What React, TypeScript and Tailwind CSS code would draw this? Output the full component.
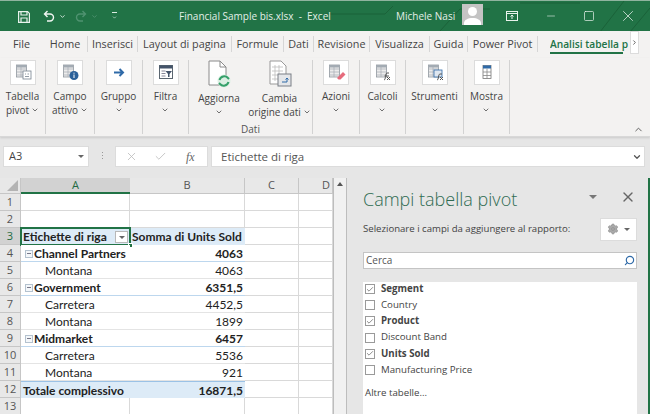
import React from 'react';
import { ChevronDown, ChevronUp, ChevronRight, X, Check, Settings, Search, Minus, Square } from 'lucide-react';

const ui = { fontFamily: '"Open Sans", "Noto Sans", sans-serif' };
const cellFont = { fontFamily: 'Lato, "Open Sans", sans-serif' };

const tabs: [string, number][] = [
  ['File', 43],
  ['Home', 44],
  ['Inserisci', 50],
  ['Layout di pagina', 94],
  ['Formule', 52],
  ['Dati', 30],
  ['Revisione', 56],
  ['Visualizza', 60],
  ['Guida', 38],
  ['Power Pivot', 71],
];

const Doc = () => (
  <svg viewBox="0 0 26 25" className="w-[26px] h-[25px]">
    <rect x="0.5" y="0.5" width="25" height="24" fill="#fff" stroke="#dcdcdc" />
  </svg>
);

// small ribbon glyphs, drawn on the white 26px tile
const IconSheet = ({ badge }: { badge: React.ReactNode }) => (
  <svg viewBox="0 0 26 25" className="absolute inset-0 w-[26px] h-[25px]">
    <rect x="6.500" y="5" width="10" height="12" fill="#ececec" stroke="#8f979f" strokeWidth="0.8" />
    <path d="M6.500 9h10M6.500 12h10M6.500 15h10M11 5v12" stroke="#a8aeb4" strokeWidth="0.7" />
    <rect x="6.500" y="5" width="10" height="2.500" fill="#a3abb3" />
    {badge}
  </svg>
);

const Big = ({ w, lines, icon, chevAfter, chevBelow = false }: { w: number; lines: string[]; icon: React.ReactNode; chevAfter?: boolean; chevBelow?: boolean }) => (
  <div className="flex flex-col items-center shrink-0" style={{ width: w }}>
    <div className="relative w-[26px] h-[25px] mt-[2px]">
      <Doc />
      {icon}
    </div>
    <div className="mt-[4px] text-[10px] leading-[14px] text-[#444] text-center whitespace-nowrap">
      {lines.map((l, i) => (
        <div key={i} className="flex items-center justify-center gap-[2px]">
          {l}
          {chevAfter && i === lines.length - 1 && <ChevronDown className="w-[8px] h-[8px] text-[#555]" strokeWidth={2.5} />}
        </div>
      ))}
      {chevBelow && <div className="flex justify-center"><ChevronDown className="w-[8px] h-[14px] text-[#555]" strokeWidth={2.5} /></div>}
    </div>
  </div>
);

const Sep = () => <div className="w-px h-[74px] mt-[2px] shrink-0 bg-[#d2d2d2]" />;

const rows: { n: number; a?: string; b?: string; kind?: string }[] = [
  { n: 1 },
  { n: 2 },
  { n: 3, kind: 'head' },
  { n: 4, a: 'Channel Partners', b: '4063', kind: 'group' },
  { n: 5, a: 'Montana', b: '4063', kind: 'item' },
  { n: 6, a: 'Government', b: '6351,5', kind: 'group' },
  { n: 7, a: 'Carretera', b: '4452,5', kind: 'item' },
  { n: 8, a: 'Montana', b: '1899', kind: 'item' },
  { n: 9, a: 'Midmarket', b: '6457', kind: 'group' },
  { n: 10, a: 'Carretera', b: '5536', kind: 'item' },
  { n: 11, a: 'Montana', b: '921', kind: 'item' },
  { n: 12, a: 'Totale complessivo', b: '16871,5', kind: 'total' },
  { n: 13 },
];

const fields: [string, boolean][] = [
  ['Segment', true],
  ['Country', false],
  ['Product', true],
  ['Discount Band', false],
  ['Units Sold', true],
  ['Manufacturing Price', false],
];

const Row = ({ r }: { r: (typeof rows)[number] }) => {
  const grid = 'border-b border-r border-[#d9d9d9]';
  const selected = r.kind === 'head';
  const blue = r.kind === 'head' || r.kind === 'total';
  const line =
    r.kind === 'group' ? 'border-b border-[#bdd7ee]' : r.kind === 'total' ? 'border-t border-[#9bc2e6]' : r.kind === 'item' ? 'border-b border-[#e4e4e4]' : '';
  return (
    <>
      <div className={`flex items-center justify-center border-b border-r border-[#c6c6c6] text-[11px] ${selected ? 'bg-[#d2d2d2] text-[#1f6b42]' : 'bg-[#e8e8e8] text-[#555]'}`} style={ui}>
        {r.n}
      </div>
      <div className={`relative flex items-center pt-px text-[12px] whitespace-nowrap text-[#222] ${blue ? 'bg-[#ddebf7]' : 'bg-white'} ${r.kind ? line : grid}`} style={cellFont}>
        {r.kind === 'head' && (
          <>
            <span className="pl-[2px] font-bold">Etichette di riga</span>
            <div className="absolute left-[94px] top-[3px] w-[13px] h-[12px] bg-white border border-[#b8b8b8] flex items-center justify-center">
              <div className="w-0 h-0 border-l-[3px] border-r-[3px] border-t-[3px] border-l-transparent border-r-transparent border-t-[#666]" />
            </div>
            <div className="absolute -left-px -top-px -right-px -bottom-px border-2 border-[#217346]" />
            <div className="absolute -right-[3px] -bottom-[3px] w-[5px] h-[5px] bg-[#217346] border border-white" />
          </>
        )}
        {r.kind === 'group' && (
          <>
            <div className="ml-[4px] mr-px w-[8px] h-[8px] border border-[#b4c2cf] flex items-center justify-center bg-[#f4f7fa]">
              <div className="w-[4px] h-px bg-[#778]" />
            </div>
            <span className="font-bold">{r.a}</span>
          </>
        )}
        {r.kind === 'item' && <span className="pl-[24px]">{r.a}</span>}
        {r.kind === 'total' && <span className="pl-[2px] font-bold">{r.a}</span>}
      </div>
      <div className={`flex items-center justify-end pt-px pr-[2px] text-[12px] whitespace-nowrap text-[#222] ${blue ? 'bg-[#ddebf7]' : 'bg-white'} ${r.kind ? line : grid} ${r.kind === 'group' || r.kind === 'total' ? 'font-bold' : ''}`} style={cellFont}>
        {r.kind === 'head' ? <span className="font-bold pl-[2px] w-full">Somma di Units Sold</span> : r.b}
      </div>
      <div className={`bg-white ${grid}`} />
      <div className={`bg-white ${grid}`} />
    </>
  );
};

export default function App() {
  return (
    <div className="w-[650px] h-[414px] overflow-hidden flex flex-col bg-[#e6e6e6]" style={ui}>
      {/* title bar */}
      <div className="relative h-[31px] shrink-0 bg-[#217346] border-t border-[#8fb49f] flex items-center text-[#e3efe8]">
        <svg viewBox="0 0 650 31" className="absolute inset-0 w-[650px] h-[31px]" fill="none" stroke="#1b6239" strokeWidth="1">
          <path d="M325 13h60l8-8M440 30l20-22h30M600 31l24-31M630 31l20-24M520 2h60" />
        </svg>
        <svg viewBox="0 0 12 12" className="relative ml-[18px] w-[12px] h-[12px] mt-[1px]" fill="none" stroke="#e8f2ec" strokeWidth="1.2">
          <path d="M0.600 0.600h9l1.800 1.800v9H0.600z" />
          <path d="M3 0.600v3.400h6V0.600M3 11.400V7h6v4.400" />
        </svg>
        <svg viewBox="0 0 12 12" className="relative ml-[13px] w-[12px] h-[12px]" fill="none" stroke="#f0f6f2" strokeWidth="1.4">
          <path d="M4.500 1 1.500 4l3 3M1.500 4H7a3.500 3.500 0 0 1 0 7H4" />
        </svg>
        <ChevronDown className="relative ml-[4px] w-[7px] h-[7px] text-[#dcebe2]" strokeWidth={3} />
        <svg viewBox="0 0 12 12" className="relative ml-[9px] w-[12px] h-[12px]" fill="none" stroke="#4f9270" strokeWidth="1.4">
          <path d="M7.500 1l3 3-3 3M10.500 4H5a3.500 3.500 0 0 0 0 7h3" />
        </svg>
        <ChevronDown className="relative ml-[4px] w-[7px] h-[7px] text-[#4f9270]" strokeWidth={3} />
        <div className="relative ml-[13px] flex flex-col items-center gap-[1.5px]">
          <div className="w-[5px] h-px bg-[#dcebe2]" />
          <ChevronDown className="w-[7px] h-[5px] text-[#dcebe2]" strokeWidth={3} />
        </div>
        <span className="relative ml-[61px] text-[10px] whitespace-nowrap w-[217px]">Financial Sample bis.xlsx&nbsp; -&nbsp; Excel</span>
        <span className="relative text-[10px] whitespace-nowrap w-[66px]">Michele Nasi</span>
        <svg viewBox="0 0 21 21" className="relative w-[21px] h-[21px] -mt-[3px]">
          <rect width="21" height="21" fill="#c4c4c4" />
          <circle cx="10.500" cy="7.500" r="4.500" fill="#fff" />
          <path d="M2 21v-2c0-3 4-5 8.500-5s8.500 2 8.500 5v2z" fill="#fff" />
        </svg>
        <svg viewBox="0 0 12 10" className="relative ml-[23px] w-[12px] h-[10px]" fill="none" stroke="#e8f2ec">
          <rect x="0.500" y="0.500" width="11" height="9" />
          <path d="M1 2.500h10M6 8V4M4.500 5.500 6 4l1.500 1.500" />
        </svg>
        <Minus className="relative ml-[27px] w-[12px] h-[12px] text-[#e8f2ec]" strokeWidth={1.2} />
        <Square className="relative ml-[26px] w-[12px] h-[12px] text-[#e8f2ec]" strokeWidth={1.4} />
        <X className="relative ml-[24px] w-[18px] h-[18px] text-[#e8f2ec]" strokeWidth={1} />
      </div>

      {/* tabs */}
      <div className="relative h-[27px] shrink-0 bg-[#f3f2f1] flex items-start pt-[5px] text-[10.8px] text-[#444]">
        {tabs.map(([t, w], i) => (
          <div key={t} className={`h-[16px] flex items-center justify-center whitespace-nowrap shrink-0 ${i > 1 ? 'border-l border-[#d6d6d6]' : ''} ${i === 9 ? 'border-r' : ''}`} style={{ width: w }}>
            {t}
          </div>
        ))}
        <div className="relative ml-[12px] h-[18px] text-[10.2px] text-[#217346] font-semibold whitespace-nowrap w-[80px] overflow-hidden leading-[16px]">
          Analisi tabella p
          <div className="absolute left-0 bottom-0 w-[73px] h-[2px] bg-[#217346]" />
        </div>
        <div className="w-[9px] h-[23px] -mt-[5px] bg-white border border-[#dcdcdc] flex items-center justify-center">
          <ChevronRight className="w-[7px] h-[7px] text-[#555]" strokeWidth={3} />
        </div>
      </div>

      {/* ribbon */}
      <div className="relative h-[79px] shrink-0 bg-[#f3f2f1] flex items-start border-b border-[#d8d8d8] shadow-[0_1px_2px_rgba(0,0,0,0.12)]">
        <Big w={45} lines={['Tabella', 'pivot']} chevAfter icon={<IconSheet badge={<><rect x="13" y="11" width="8" height="8" fill="#fff" stroke="#77838f" strokeWidth="0.8" /><path d="M15 14h1M17.500 14H19M15 16.500h4" stroke="#77838f" strokeWidth="0.8" /></>} />} />
        <Sep />
        <Big w={48} lines={['Campo', 'attivo']} chevAfter icon={<IconSheet badge={<><circle cx="17" cy="15.500" r="4.500" fill="#2a6099" /><path d="M17 14.500V18M17 12.700v1" stroke="#fff" /></>} />} />
        <Sep />
        <Big w={47} lines={['Gruppo']} chevBelow icon={<svg viewBox="0 0 26 25" className="absolute inset-0 w-[26px] h-[25px]"><path d="M8 12.500h9M13.500 9l3.500 3.500-3.500 3.500" fill="none" stroke="#2f6aa8" strokeWidth="2" /></svg>} />
        <Sep />
        <Big w={45} lines={['Filtra']} chevBelow icon={<svg viewBox="0 0 26 25" className="absolute inset-0 w-[26px] h-[25px]"><rect x="6.500" y="5.500" width="13" height="13" fill="#fff" stroke="#5b6670" strokeWidth="1" /><rect x="6.500" y="5.500" width="13" height="3" fill="#44546a" /><path d="M8.500 11h4M8.500 13.500h4M8.500 16h4" stroke="#889" /><path d="M12.500 11h6.500l-2.500 3v3h-1.500v-3z" fill="#44546a" /></svg>} />
        <Sep />
        <div className="flex flex-col items-center shrink-0 w-[123px] h-[79px]">
          <div className="flex">
            <div className="flex flex-col items-center w-[56px] ml-[2px]">
              <svg viewBox="0 0 24 28" className="w-[24px] h-[28px] mt-[2px] mb-[3px]">
                <path d="M2 1h11l6 6v18H2z" fill="#fff" stroke="#8a8a8a" />
                <path d="M13 1v6h6" fill="none" stroke="#8a8a8a" />
                <circle cx="17" cy="21" r="6.500" fill="#dcefe3" />
                <path d="M12.500 20a5 5 0 0 1 8.500-2l1 1M21.500 22a5 5 0 0 1-8.500 2l-1-1" fill="none" stroke="#36a06a" strokeWidth="2" />
              </svg>
              <div className="text-[10px] leading-[14px] text-[#444]">Aggiorna</div>
              <ChevronDown className="w-[8px] h-[14px] text-[#555]" strokeWidth={2.5} />
            </div>
            <div className="flex flex-col items-center w-[65px]">
              <svg viewBox="0 0 26 28" className="w-[26px] h-[28px] mt-[2px] mb-[3px]">
                <path d="M3 1h11l5 5v18H3z" fill="#fff" stroke="#999" />
                <path d="M5 7h11M5 11h11M5 15h11M5 19h11M8 5v16M12 5v16" stroke="#bbb" strokeWidth="0.8" />
                <rect x="11" y="14" width="13" height="12" fill="#e4e6e9" stroke="#7a7f86" />
                <path d="M15 22h5v-4M18.500 19.500 20 18l1.500 1.500" fill="none" stroke="#2f6aa8" />
              </svg>
              <div className="text-[10px] leading-[14px] text-[#444]">Cambia</div>
              <div className="text-[10px] leading-[14px] text-[#444] flex items-center gap-[2px] whitespace-nowrap">
                origine dati
                <ChevronDown className="w-[8px] h-[8px] text-[#555]" strokeWidth={2.5} />
              </div>
            </div>
          </div>
          <div className="mt-auto mb-px text-[10px] leading-[14px] text-[#555]">Dati</div>
        </div>
        <Sep />
        <Big w={46} lines={['Azioni']} chevBelow icon={<IconSheet badge={<path d="M14 18l6-6 2.500 2.500-5 5h-2z" fill="#e66b7c" />} />} />
        <Sep />
        <Big w={45} lines={['Calcoli']} chevBelow icon={<IconSheet badge={<path d="M14 20c2 0 1-7 3-7h2M14.500 16H19M17 17l3 3M20 17l-3 3" fill="none" stroke="#555" />} />} />
        <Sep />
        <Big w={57} lines={['Strumenti']} chevBelow icon={<IconSheet badge={<><rect x="12" y="10" width="8" height="7" fill="#dfe7f0" stroke="#2f6aa8" strokeWidth="0.8" /><path d="M15 20c2 0 1-6 3-6h2M18 17l3 3M21 17l-3 3" fill="none" stroke="#555" /></>} />} />
        <Sep />
        <Big w={45} lines={['Mostra']} chevBelow icon={<svg viewBox="0 0 26 25" className="absolute inset-0 w-[26px] h-[25px]"><rect x="9" y="5.500" width="8" height="13" fill="#fff" stroke="#777" strokeWidth="0.8" /><rect x="9" y="5.500" width="8" height="3" fill="#2f6aa8" /><path d="M9 12h8M9 15.500h8M13 8.500v10" stroke="#888" strokeWidth="0.8" /></svg>} />
        <Sep />
        <ChevronUp className="absolute right-[6px] bottom-[1px] w-[11px] h-[11px] text-[#555]" strokeWidth={2} />
      </div>

      {/* formula bar */}
      <div className="h-[41px] shrink-0 flex items-start pt-[9px] pl-[3px] pr-[5px]">
        <div className="w-[86px] h-[21px] bg-white border border-[#dcdcdc] flex items-center justify-between pl-[5px] pr-[4px] text-[11px] text-[#444]">
          A3
          <div className="w-0 h-0 border-l-[3px] border-r-[3px] border-t-[3px] border-l-transparent border-r-transparent border-t-[#666]" />
        </div>
        <div className="ml-[13px] mt-[6px] flex flex-col gap-[2px]">
          <div className="w-px h-px bg-[#999]" />
          <div className="w-px h-px bg-[#999]" />
          <div className="w-px h-px bg-[#999]" />
        </div>
        <div className="ml-[12px] w-[93px] h-[21px] bg-white border border-[#dcdcdc] flex items-center text-[#bbb]">
          <X className="ml-[9px] w-[13px] h-[13px]" strokeWidth={1.5} />
          <Check className="ml-[16px] w-[13px] h-[13px]" strokeWidth={1.5} />
          <span className="ml-[19px] text-[12px] italic text-[#666]" style={{ fontFamily: '"Liberation Serif", serif' }}>fx</span>
        </div>
        <div className="ml-[3px] flex-1 h-[21px] bg-white border border-[#dcdcdc] flex items-center justify-between pl-[9px] pr-[2px] text-[11.5px] text-[#555]">
          Etichette di riga
          <ChevronDown className="w-[10px] h-[10px] text-[#555]" strokeWidth={3} />
        </div>
      </div>

      {/* sheet + pane */}
      <div className="flex-1 flex min-h-0">
        <div className="w-[348px] shrink-0 flex items-start overflow-hidden">
          <div className="grid shrink-0 grid-cols-[21px_109px_115px_54px_34px] grid-rows-[16px_repeat(13,17px)]">
            <div className="bg-[#e8e8e8] border-b border-r border-[#c6c6c6] relative overflow-hidden">
              <svg viewBox="0 0 12 12" className="absolute right-[2px] bottom-[2px] w-[11px] h-[11px]"><path d="M12 0v12H0z" fill="#b4b4b4" /></svg>
            </div>
            <div className="bg-[#d2d2d2] border-b-2 border-[#217346] flex items-center justify-center text-[11px] text-[#1f6b42]">A</div>
            {['B', 'C', 'D'].map((c, i) => (
              <div key={c} className={`bg-[#e8e8e8] border-b border-r border-[#c6c6c6] flex items-center text-[11px] text-[#555] ${i === 2 ? 'justify-end pr-[2px]' : 'justify-center'}`}>{c}</div>
            ))}
            {rows.map((r) => (
              <Row key={r.n} r={r} />
            ))}
          </div>
          <div className="w-[14px] h-full shrink-0 bg-[#f1f1f1] border-l border-r border-[#bdbdbd] relative">
            <div className="absolute left-[3px] top-[4px] w-0 h-0 border-l-[3px] border-r-[3px] border-b-[4px] border-l-transparent border-r-transparent border-b-[#555]" />
          </div>
        </div>

        {/* pivot pane */}
        <div className="flex-1 flex flex-col border-r-2 border-[#217346] pl-[15px] pr-[11px] bg-[#e6e6e6] min-w-0">
          <div className="flex items-center h-[38px] pt-[4px] shrink-0">
            <div className="text-[18px] leading-[24px] text-[#2f6b52] whitespace-nowrap w-[226px]" style={{ fontWeight: 300 }}>Campi tabella pivot</div>
            <div className="w-0 h-0 border-l-[4px] border-r-[4px] border-t-[4px] border-l-transparent border-r-transparent border-t-[#777] mb-[4px]" />
            <X className="ml-[23px] mb-[4px] w-[16px] h-[16px] text-[#666]" strokeWidth={2} />
          </div>
          <div className="flex items-center justify-between h-[24px] mt-px shrink-0">
            <span className="text-[9.6px] text-[#444] whitespace-nowrap">Selezionare i campi da aggiungere al rapporto:</span>
            <div className="w-[37px] h-[23px] bg-white border border-[#dcdcdc] flex items-center justify-center gap-[5px]">
              <Settings className="w-[12px] h-[12px] text-[#999]" fill="#aaa" strokeWidth={2} />
              <div className="w-0 h-0 border-l-[3px] border-r-[3px] border-t-[3px] border-l-transparent border-r-transparent border-t-[#666]" />
            </div>
          </div>
          <div className="mt-[11px] h-[17px] shrink-0 bg-white border border-[#c4c4c4] flex items-center justify-between pl-[2px] pr-[1px] text-[10px] text-[#555]">
            Cerca
            <Search className="w-[11px] h-[11px] text-[#2f6aa8] -scale-x-100" strokeWidth={2.5} />
          </div>
          <div className="mt-[13px] flex-1 bg-white pl-[2px] text-[9.7px] text-[#444]">
            <div className="-mt-px">
              {fields.map(([f, on]) => (
                <div key={f} className="h-[16.2px] flex items-center">
                  <div className="w-[10px] h-[10px] border border-[#9a9a9a] bg-white flex items-center justify-center shrink-0">
                    {on && <Check className="w-[9px] h-[9px] text-[#555]" strokeWidth={2} />}
                  </div>
                  <span className={`ml-[6px] whitespace-nowrap ${on ? 'font-bold' : ''}`}>{f}</span>
                </div>
              ))}
              <div className="mt-[8px]">Altre tabelle...</div>
            </div>
          </div>
        </div>
      </div>
    </div>
  );
}
